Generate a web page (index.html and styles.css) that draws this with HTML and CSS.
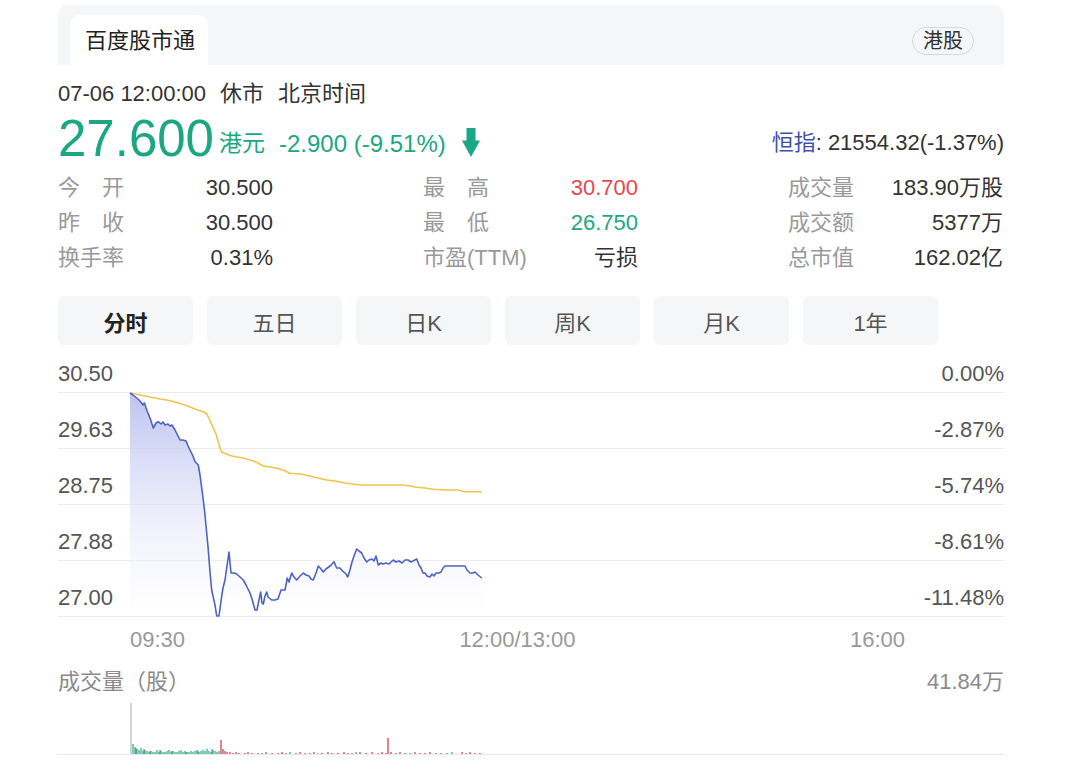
FILE: index.html
```html
<!DOCTYPE html>
<html lang="zh-CN">
<head>
    <meta charset="UTF-8">
    <meta name="viewport" content="width=device-width, initial-scale=1.0">
    <title>百度股市通</title>
    <link rel="stylesheet" href="styles.css">
</head>
<body>
<div class="page">
    <div class="topbar">
        <div class="brand-tab">百度股市通</div>
        <span class="market">港股</span>
    </div>

    <div class="meta"><span>07-06 12:00:00</span><span>休市</span><span>北京时间</span></div>

    <div class="quote">
        <span class="price">27.600</span>
        <span class="unit">港元</span>
        <span class="change">-2.900 (-9.51%)</span>
        <svg class="arrow" width="18" height="29" viewBox="0 0 18 29">
            <path d="M4.5 0h9v12.5H18L9 29 0 12.5h4.5z" fill="#1ba784"/>
        </svg>
        <div class="index"><span class="index-name">恒指</span>: 21554.32(-1.37%)</div>
    </div>

    <div class="stats">
        <div class="cell"><span class="lbl">今开</span><span class="val">30.500</span></div>
        <div class="cell"><span class="lbl">最高</span><span class="val up">30.700</span></div>
        <div class="cell"><span class="lbl">成交量</span><span class="val">183.90万股</span></div>
        <div class="cell"><span class="lbl">昨收</span><span class="val">30.500</span></div>
        <div class="cell"><span class="lbl">最低</span><span class="val down">26.750</span></div>
        <div class="cell"><span class="lbl">成交额</span><span class="val">5377万</span></div>
        <div class="cell"><span class="lbl">换手率</span><span class="val">0.31%</span></div>
        <div class="cell"><span class="lbl">市盈(TTM)</span><span class="val">亏损</span></div>
        <div class="cell"><span class="lbl">总市值</span><span class="val">162.02亿</span></div>
    </div>

    <div class="periods">
        <div class="period active">分时</div>
        <div class="period">五日</div>
        <div class="period">日K</div>
        <div class="period">周K</div>
        <div class="period">月K</div>
        <div class="period">1年</div>
    </div>

    <div class="chart">
        <div class="grid-row"><span>30.50</span><span>0.00%</span></div>
        <div class="grid-row"><span>29.63</span><span>-2.87%</span></div>
        <div class="grid-row"><span>28.75</span><span>-5.74%</span></div>
        <div class="grid-row"><span>27.88</span><span>-8.61%</span></div>
        <div class="grid-row"><span>27.00</span><span>-11.48%</span></div>

        <!-- viewBox uses page coordinates -->
        <svg class="plot" width="946" height="272" viewBox="58 346 946 272">
            <defs>
                <linearGradient id="fade" gradientUnits="userSpaceOnUse" x1="0" y1="393" x2="0" y2="616">
                    <stop offset="0" stop-color="#b9c0f0" stop-opacity="0.95"/>
                    <stop offset="1" stop-color="#ffffff" stop-opacity="0.3"/>
                </linearGradient>
            </defs>
            <polygon fill="url(#fade)" points="130,393 133,395 136.7,398 139,400 141.7,403 143,405 144.5,403 146.7,410 150,418 153.3,428 156,423 158.3,421.7 161,424 163,422 165,425 168,424 170,426 172,425 175,430 178,436 180,440 183,440 186,441 188,446 190,450 193,456 195,461.7 198.3,465 200,475 203.3,500 205,515 208.3,550 210,572 211.7,590 213,596 215,605 216.7,616 219,616 221.7,596 223,588 225,580 227,566 229,552 231,573 234,573 236.7,574 240,577 243.3,580 246,585 250,593 252,599 255,610 257,610 259,600 260.7,592 262,603 263.3,604 265,596 266.7,592 268,597 271.7,600 275,600 278,599 281,590 285,590 287.3,578 289,582 291.7,573 294,577 296.7,580 300,576 303.3,573 306,575 309,576 311,579 313.3,580 316,573 318.3,566 321,569 323.3,572 326,569 330,566 332,564 334,561.7 336.7,568 340,568 343.3,571.7 346,574 347.7,577 350,570 351.7,563 354,556 356.7,549 359,551 361.7,553 364,558 366.7,562 369,560 372,559 374,561 376,556 378.3,565 381,563 383,564 386,563 389,564 391,562 393.3,560 396,562 399,561 402,563 405,560 408,560 411,562 413,561 416.7,559 419,565 421,568 423,573 425,573 427,576 430,577 432,574 434,576 436,573 439,573 441,572 443,568 445,566 455,566 465,566 467,570 470,573 473,573 475,572 478,575 481.7,578 481.7,616 130,616"/>
            <polyline fill="none" stroke="#eac64c" stroke-width="1.6" stroke-linejoin="round" points="130,393 140,395 150,397 160,399 166.7,400 175,402 185,405 195,409 203.3,411.7 206,413 208.3,417 211,423 213.3,428 216,434 218.3,442 220,448 221.7,452 226,454 232,456 236.7,457 243,458 250,460 256,462 263.3,466 270,467 276.7,468.3 283,470 290,473.3 300,474 310,476 318,478 326.7,480 335,481 345,483 353,484 360,485 370,485 380,485 392,485 403,485 410,486 416.7,487.3 425,488 433.3,489.3 445,490 458,490 462,491 465,491.7 481.7,491.7"/>
            <polyline fill="none" stroke="#4d62c4" stroke-width="1.6" stroke-linejoin="round" points="130,393 133,395 136.7,398 139,400 141.7,403 143,405 144.5,403 146.7,410 150,418 153.3,428 156,423 158.3,421.7 161,424 163,422 165,425 168,424 170,426 172,425 175,430 178,436 180,440 183,440 186,441 188,446 190,450 193,456 195,461.7 198.3,465 200,475 203.3,500 205,515 208.3,550 210,572 211.7,590 213,596 215,605 216.7,616 219,616 221.7,596 223,588 225,580 227,566 229,552 231,573 234,573 236.7,574 240,577 243.3,580 246,585 250,593 252,599 255,610 257,610 259,600 260.7,592 262,603 263.3,604 265,596 266.7,592 268,597 271.7,600 275,600 278,599 281,590 285,590 287.3,578 289,582 291.7,573 294,577 296.7,580 300,576 303.3,573 306,575 309,576 311,579 313.3,580 316,573 318.3,566 321,569 323.3,572 326,569 330,566 332,564 334,561.7 336.7,568 340,568 343.3,571.7 346,574 347.7,577 350,570 351.7,563 354,556 356.7,549 359,551 361.7,553 364,558 366.7,562 369,560 372,559 374,561 376,556 378.3,565 381,563 383,564 386,563 389,564 391,562 393.3,560 396,562 399,561 402,563 405,560 408,560 411,562 413,561 416.7,559 419,565 421,568 423,573 425,573 427,576 430,577 432,574 434,576 436,573 439,573 441,572 443,568 445,566 455,566 465,566 467,570 470,573 473,573 475,572 478,575 481.7,578"/>
        </svg>
    </div>

    <div class="axis"><span>09:30</span><span>12:00/13:00</span><span>16:00</span></div>

    <div class="vol-head"><span>成交量（股）</span><span>41.84万</span></div>

    <svg class="vol" width="946" height="62" viewBox="58 694 946 62">
        <line x1="58" y1="754.5" x2="1004" y2="754.5" stroke="#e8e8e8" stroke-width="1"/>
        <line x1="131" y1="703" x2="131" y2="754" stroke="#d4d4d4" stroke-width="2"/>
        <path stroke="#3dbb95" stroke-width="1.4" d="M133 754v-10M135 754v-7M137 754v-5M139 754v-4M141 754v-6M143 754v-3M145 754v-4M147 754v-3M149 754v-2M151 754v-3M153 754v-2M155 754v-2M157 754v-4M159 754v-2M161 754v-3M163 754v-2M165 754v-2M167 754v-3M169 754v-4M171 754v-2M173 754v-3M175 754v-2M177 754v-2M179 754v-3M181 754v-4M183 754v-2M185 754v-3M187 754v-2M189 754v-2M191 754v-3M193 754v-2M195 754v-3M197 754v-4M199 754v-2M201 754v-3M203 754v-4M205 754v-3M207 754v-5M209 754v-3M211 754v-2M213 754v-4M215 754v-3M217 754v-2M219 754v-3M262 754v-1M290 754v-2M318 754v-1M356 754v-2M410 754v-1M452 754v-2"/>
        <path stroke="#5b6b78" stroke-width="1" d="M136 754v-6M144 754v-5M150 754v-3M160 754v-4M172 754v-3M186 754v-2M198 754v-3M212 754v-5"/>
        <path stroke="#d2545c" stroke-width="1.4" d="M221 754v-14M223 754v-5M225 754v-3M227 754v-2M230 754v-2M233 754v-1M236 754v-2M239 754v-1M245 754v-1M248 754v-2M252 754v-1M258 754v-1M266 754v-2M272 754v-1M278 754v-1M282 754v-2M286 754v-1M296 754v-1M300 754v-2M305 754v-1M310 754v-1M314 754v-2M322 754v-1M328 754v-2M332 754v-1M338 754v-1M344 754v-2M348 754v-1M352 754v-1M360 754v-2M366 754v-1M372 754v-2M378 754v-1M382 754v-2M386 754v-1M388 754v-16M391 754v-2M396 754v-1M400 754v-2M405 754v-1M415 754v-2M420 754v-1M425 754v-1M430 754v-2M436 754v-1M441 754v-1M447 754v-1M462 754v-2M466 754v-1M470 754v-2M475 754v-1M480 754v-1"/>
    </svg>
</div>
</body>
</html>
```

FILE: styles.css
```css
body {
    margin: 0;
    padding: 0;
    background-color: #fff;
    font-family: "Liberation Sans", "Noto Sans CJK SC", sans-serif;
    color: #333;
}
.page {
    width: 946px;
    margin-left: 58px;
}

/* top bar */
.topbar {
    margin-top: 5px;
    height: 60px;
    background-color: #f5f6f7;
    border-radius: 10px 10px 0 0;
    display: flex;
    align-items: flex-end;
    justify-content: space-between;
    padding: 0 30px 0 12px;
    box-sizing: border-box;
}
.brand-tab {
    width: 138px;
    height: 50px;
    box-sizing: border-box;
    padding-left: 15px;
    background-color: #fff;
    border-radius: 10px 10px 0 0;
    font-size: 22px;
    line-height: 52px;
    color: #222;
}
.market {
    margin-bottom: 10px;
    height: 28px;
    box-sizing: border-box;
    padding: 0 10px;
    border: 1px solid #d8d8d8;
    border-radius: 14px;
    font-size: 20px;
    line-height: 26px;
    color: #333;
}

/* time + quote */
.meta {
    margin-top: 14px;
    height: 28px;
    font-size: 22px;
    line-height: 29px;
    display: flex;
    gap: 14px;
    color: #333;
}
.quote {
    margin-top: 5px;
    height: 53px;
    display: flex;
    align-items: flex-end;
    color: #1ba784;
}
.price {
    font-size: 51px;
    line-height: 53px;
}
.unit, .change, .index {
    font-size: 23px;
    line-height: 23px;
    margin-bottom: 10px;
}
.unit {
    margin-left: 5px;
}
.change {
    margin-left: 14px;
    font-size: 24px;
}
.arrow {
    margin-left: 16px;
    margin-bottom: 8px;
}
.index {
    margin-left: auto;
    font-size: 22px;
    color: #333;
    margin-bottom: 11px;
}
.index-name {
    color: #3f51a8;
}

/* stats */
.stats {
    margin-top: 5px;
    display: grid;
    grid-template-columns: 215px 215px 215px;
    column-gap: 150px;
    grid-auto-rows: 35px;
    font-size: 22px;
    line-height: 35px;
}
.cell {
    display: flex;
    justify-content: space-between;
}
.lbl {
    display: inline-block;
    min-width: 66px;
    text-align: justify;
    text-align-last: justify;
    color: #999;
}
.val {
    color: #333;
}
.val.up {
    color: #e6474d;
}
.val.down {
    color: #1ba784;
}

/* period tabs */
.periods {
    margin-top: 21px;
    display: flex;
    gap: 14px;
}
.period {
    width: 135px;
    height: 49px;
    background-color: #f5f6f7;
    border-radius: 6px;
    text-align: center;
    font-size: 22px;
    line-height: 56px;
    color: #555;
}
.period.active {
    font-weight: bold;
    color: #222;
}

/* intraday chart */
.chart {
    position: relative;
    margin-top: 1px;
}
.grid-row {
    height: 56px;
    box-sizing: border-box;
    border-bottom: 1px solid #ececec;
    display: flex;
    justify-content: space-between;
    align-items: flex-end;
    padding-bottom: 6px;
    font-size: 22px;
    line-height: 24px;
    color: #555;
}
.grid-row:first-child {
    height: 47px;
}
.plot {
    position: absolute;
    left: 0;
    top: 0;
}
.axis {
    width: 775px;
    margin-left: 72px;
    margin-top: 11px;
    display: flex;
    justify-content: space-between;
    font-size: 22px;
    line-height: 24px;
    color: #999;
}
.vol-head {
    margin-top: 18px;
    display: flex;
    justify-content: space-between;
    font-size: 22px;
    line-height: 24px;
    color: #8a8a8a;
}
.vol {
    display: block;
}
```
